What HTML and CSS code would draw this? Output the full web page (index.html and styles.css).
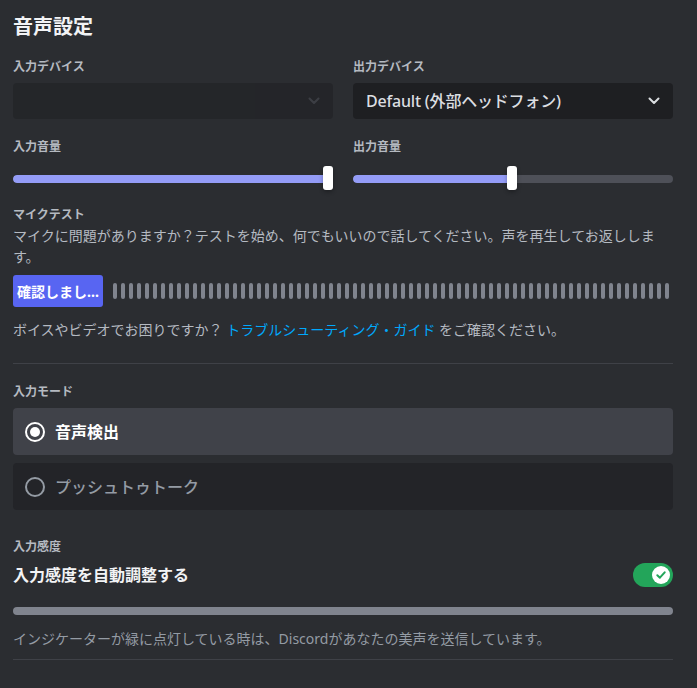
FILE: index.html
```html
<!DOCTYPE html>
<html lang="ja">
<head>
<meta charset="utf-8">
<title>音声設定</title>
<link rel="stylesheet" href="styles.css">
</head>
<body>
<main class="page">
  <h1 class="title">音声設定</h1>

  <div class="cols">
    <div class="col">
      <div class="label">入力デバイス</div>
      <div class="select disabled">
        <span class="select-text"></span>
        <svg class="chev" width="12" height="8" viewBox="0 0 12 8"><path d="M1.5 1.5 L6 6 L10.5 1.5" fill="none" stroke="currentColor" stroke-width="2" stroke-linecap="round" stroke-linejoin="round"/></svg>
      </div>
    </div>
    <div class="col">
      <div class="label">出力デバイス</div>
      <div class="select">
        <span class="select-text">Default (外部ヘッドフォン)</span>
        <svg class="chev" width="12" height="8" viewBox="0 0 12 8"><path d="M1.5 1.5 L6 6 L10.5 1.5" fill="none" stroke="currentColor" stroke-width="2" stroke-linecap="round" stroke-linejoin="round"/></svg>
      </div>
    </div>
    <div class="col">
      <div class="label">入力音量</div>
      <div class="slider">
        <div class="track"><div class="fill" style="width:100%"></div></div>
        <div class="thumb" style="left:calc(100% - 10px)"></div>
      </div>
    </div>
    <div class="col">
      <div class="label">出力音量</div>
      <div class="slider">
        <div class="track"><div class="fill" style="width:50%"></div></div>
        <div class="thumb" style="left:calc(50% - 6px)"></div>
      </div>
    </div>
  </div>

  <section class="mic">
    <div class="label">マイクテスト</div>
    <p class="desc">マイクに問題がありますか？テストを始め、何でもいいので話してください。声を再生してお返しします。</p>
    <div class="mic-row">
      <button class="btn">確認しまし...</button>
      <div class="bars" id="bars"></div>
    </div>
    <p class="help">ボイスやビデオでお困りですか？ <span class="link">トラブルシューティング・ガイド</span> をご確認ください。</p>
  </section>

  <hr class="divider">

  <section class="mode">
    <div class="label">入力モード</div>
    <div class="radio selected">
      <span class="circle"><span class="dot"></span></span>
      <span class="radio-text">音声検出</span>
    </div>
    <div class="radio">
      <span class="circle"></span>
      <span class="radio-text">プッシュトゥトーク</span>
    </div>
  </section>

  <section class="sens">
    <div class="label">入力感度</div>
    <div class="sens-row">
      <span class="sens-title">入力感度を自動調整する</span>
      <span class="toggle">
        <span class="knob">
          <svg width="12" height="12" viewBox="0 0 12 12"><path d="M2.3 6.2 L4.9 8.7 L9.7 3.3" fill="none" stroke="#23a55a" stroke-width="2" stroke-linecap="round" stroke-linejoin="round"/></svg>
        </span>
      </span>
    </div>
    <div class="meter"></div>
    <p class="note">インジケーターが緑に点灯している時は、Discordがあなたの美声を送信しています。</p>
    <hr class="divider bottom">
  </section>
</main>
<script>
  var b = document.getElementById('bars');
  for (var i = 0; i < 70; i++) { var s = document.createElement('span'); s.className = 'bar'; b.appendChild(s); }
</script>
</body>
</html>
```

FILE: styles.css
```css
* { box-sizing: border-box; }
html, body { margin: 0; padding: 0; }
body {
  background: #2b2d31;
  width: 697px;
  height: 688px;
  overflow: hidden;
  font-family: "Noto Sans", "Noto Sans CJK JP", sans-serif;
  color: #dbdee1;
}
.page {
  padding: 15px 24px 0 13px;
  width: 697px;
}
.title {
  margin: 0;
  font-size: 20px;
  line-height: 24px;
  font-weight: 700;
  color: #f2f3f5;
}
.label {
  font-size: 12px;
  line-height: 16px;
  font-weight: 700;
  color: #b5bac1;
  margin-bottom: 8px;
}
.cols {
  display: grid;
  grid-template-columns: 320px 320px;
  column-gap: 20px;
  row-gap: 20px;
  margin-top: 20px;
}
.select {
  height: 36px;
  background: #1e1f22;
  border-radius: 4px;
  display: flex;
  align-items: center;
  justify-content: space-between;
  padding: 0 13px 0 13px;
  color: #dbdee1;
}
.select.disabled { opacity: 0.5; color: #4e5058; }
.select-text { font-size: 16px; line-height: 20px; font-weight: 500; letter-spacing: -0.2px; }
.chev { display: block; }
.slider {
  position: relative;
  height: 24px;
  margin-top: 11px;
}
.track {
  position: absolute;
  left: 0; right: 0; top: 9px;
  height: 8px;
  border-radius: 4px;
  background: #4e5058;
  overflow: hidden;
}
.fill { height: 100%; background: #949cf7; border-radius: 4px; }
.thumb {
  position: absolute;
  top: 0;
  width: 10px;
  height: 24px;
  background: #ffffff;
  border-radius: 3px;
  box-shadow: 0 2px 4px rgba(0,0,0,0.3);
}
.mic { margin-top: 17px; }
.label + .desc { margin-top: -6px; }
.desc {
  margin: 0;
  font-size: 14px;
  line-height: 21px;
  color: #b5bac1;
  width: 660px;
}
.mic-row {
  display: flex;
  align-items: center;
  gap: 10px;
  margin-top: 8px;
}
.btn {
  width: 90px;
  height: 32px;
  border: 0;
  border-radius: 3px;
  background: #5865f2;
  color: #ffffff;
  font-family: "Noto Sans", "Noto Sans CJK JP", sans-serif;
  font-size: 14px;
  font-weight: 700;
  padding: 0 4px;
  white-space: nowrap;
  overflow: hidden;
  text-align: center;
}
.bars { display: flex; gap: 4px; align-items: center; }
.bar {
  display: block;
  width: 4px;
  height: 16px;
  border-radius: 2px;
  background: #80848e;
}
.help {
  margin: 13px 0 0;
  font-size: 14px;
  line-height: 20px;
  color: #b5bac1;
}
.link { color: #00a8fc; }
.divider {
  border: 0;
  height: 1px;
  background: #3f4147;
  margin: 23px 0 0;
  width: 660px;
}
.mode { margin-top: 20px; }
.radio {
  height: 47px;
  width: 660px;
  border-radius: 4px;
  background: #232428;
  display: flex;
  align-items: center;
  padding-left: 12px;
  gap: 10px;
  margin-bottom: 8px;
  color: #949ba4;
}
.radio:last-child { margin-bottom: 0; }
.radio.selected { background: #404249; color: #ffffff; }
.circle {
  width: 20px;
  height: 20px;
  border-radius: 50%;
  border: 2px solid currentColor;
  display: flex;
  align-items: center;
  justify-content: center;
}
.dot { width: 10px; height: 10px; border-radius: 50%; background: #ffffff; }
.radio-text { font-size: 16px; line-height: 20px; font-weight: 500; }
.radio.selected .radio-text { font-weight: 700; }
.sens { margin-top: 29px; }
.sens .label { margin-bottom: 0; }
.sens-row {
  display: flex;
  align-items: center;
  justify-content: space-between;
  width: 660px;
  margin-top: 8px;
}
.sens-title { font-size: 16px; line-height: 24px; font-weight: 700; color: #f2f3f5; }
.toggle {
  width: 40px;
  height: 24px;
  border-radius: 12px;
  background: #23a55a;
  display: flex;
  align-items: center;
  justify-content: flex-end;
  padding-right: 3px;
}
.knob {
  width: 18px;
  height: 18px;
  border-radius: 50%;
  background: #ffffff;
  display: flex;
  align-items: center;
  justify-content: center;
}
.knob svg { display: block; }
.meter {
  margin-top: 20px;
  width: 660px;
  height: 8px;
  border-radius: 4px;
  background: #80848e;
}
.note {
  margin: 14px 0 0;
  font-size: 14px;
  line-height: 20px;
  color: #949ba4;
}
.divider.bottom { margin-top: 10px; }
```
